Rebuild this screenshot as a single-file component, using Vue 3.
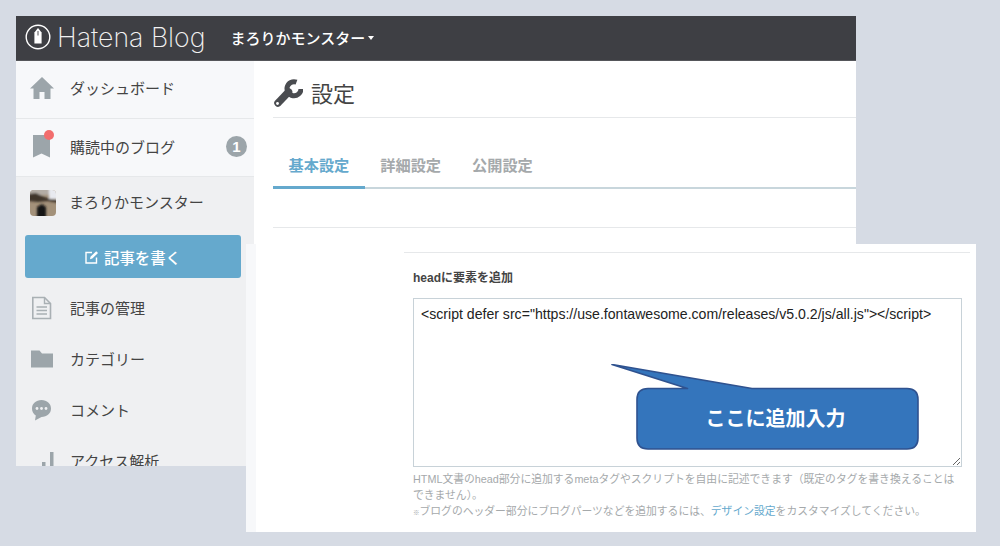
<script setup>
const mainMenu = [
  { label: '記事の管理', icon: 'doc' },
  { label: 'カテゴリー', icon: 'folder' },
  { label: 'コメント', icon: 'comment' },
  { label: 'アクセス解析', icon: 'chart' }
]
const tabs = ['基本設定', '詳細設定', '公開設定']
const headCode = '<script defer src="https://use.fontawesome.com/releases/v5.0.2/js/all.js"><' + '/script>'
</script>

<template>
  <div class="page">
    <!-- 後ろ側のスクリーンショット -->
    <div class="window">
      <header class="topbar">
        <svg class="logo-mark" viewBox="0 0 26 26">
          <circle cx="13" cy="13" r="11.8" fill="none" stroke="#fff" stroke-width="1.4" />
          <path d="M13 4 L16.6 8.5 V19.5 H9.4 V8.5 Z" fill="#fff" />
          <path d="M13 7 V11.5" stroke="#3e3f44" stroke-width="0.9" />
        </svg>
        <span class="logo-text">Hatena Blog</span>
        <span class="blog-name">まろりかモンスター</span>
        <span class="caret"></span>
      </header>

      <div class="columns">
        <aside class="sidebar">
          <div class="side-top">
            <div class="side-row first">
              <svg class="side-icon" viewBox="0 0 24 24">
                <path d="M12 1 L24 12.5 H20.5 V23 H14.5 V16 H9.5 V23 H3.5 V12.5 H0 Z" fill="#9ca5aa" />
              </svg>
              <span>ダッシュボード</span>
            </div>
            <div class="side-row second">
              <span class="bookmark">
                <svg class="side-icon" viewBox="0 0 24 24">
                  <path d="M3 0 H20 V22.5 L11.5 18.5 L3 22.5 Z" fill="#9ca5aa" />
                </svg>
                <i class="dot"></i>
              </span>
              <span class="grow">購読中のブログ</span>
              <span class="count">1</span>
            </div>
          </div>
          <div class="side-bottom">
            <div class="side-row blog">
              <svg class="avatar" viewBox="0 0 26 26">
                <defs>
                  <filter id="soft" x="-10%" y="-10%" width="120%" height="120%">
                    <feGaussianBlur stdDeviation="0.8" />
                  </filter>
                </defs>
                <rect width="26" height="26" fill="#a3917a" />
                <g filter="url(#soft)">
                  <rect x="-2" y="-2" width="30" height="7" fill="#b3aca4" />
                  <rect x="19" y="-2" width="9" height="11" fill="#e8eaf0" />
                  <path d="M-2 4 L6 3 L12 6 L20 9 L28 10 V13 L18 11 L8 12 L-2 11 Z" fill="#3f352c" />
                  <path d="M7 17 L12 14 L16 17 V28 H7 Z" fill="#151313" />
                </g>
              </svg>
              <span class="blog-label">まろりかモンスター</span>
            </div>
            <button class="write-btn">
              <svg class="pen" viewBox="0 0 14 14">
                <path d="M11.5 7.5 V13 H1 V2.5 H7" fill="none" stroke="#fff" stroke-width="1.4" />
                <path d="M5 9.2 L5.5 6.8 L11.2 1.2 L13 3 L7.3 8.6 Z" fill="#fff" />
              </svg>
              記事を書く
            </button>
            <div v-for="item in mainMenu" :key="item.label" class="side-row menu">
              <svg class="side-icon" viewBox="0 0 24 24">
                <template v-if="item.icon === 'doc'">
                  <path d="M2.8 1.5 H14.5 L20.5 7.5 V22.5 H2.8 Z" fill="none" stroke="#a9b0b4" stroke-width="1.6" />
                  <path d="M14.5 1.5 V7.5 H20.5 M6.5 11 H17 M6.5 14.5 H17 M6.5 18 H17" fill="none" stroke="#a9b0b4" stroke-width="1.4" />
                </template>
                <path v-else-if="item.icon === 'folder'" d="M1 3.5 H9.5 L12 6.5 H23 V20.5 H1 Z" fill="#9ca5aa" />
                <template v-else-if="item.icon === 'comment'">
                  <path d="M11.5 2 C17 2 21 5.6 21 10.5 C21 15.4 17 19 11.5 19 L5 22.5 L5.8 17.6 C3.4 16 2 13.5 2 10.5 C2 5.6 6 2 11.5 2 Z" fill="#9ca5aa" />
                  <circle cx="7" cy="10.5" r="1.4" fill="#eff0f2" />
                  <circle cx="11.5" cy="10.5" r="1.4" fill="#eff0f2" />
                  <circle cx="16" cy="10.5" r="1.4" fill="#eff0f2" />
                </template>
                <path v-else d="M5 19 H8.5 V24 H5 Z M12 13 H15.5 V24 H12 Z M20 3 H23.5 V24 H20 Z" fill="#9ca5aa" />
              </svg>
              <span>{{ item.label }}</span>
            </div>
          </div>
        </aside>

        <main class="content">
          <div class="title">
            <svg class="wrench" viewBox="0 0 30 30">
              <path d="M5 25 L15.5 14" stroke="#4a4c50" stroke-width="7.5" stroke-linecap="round" />
              <path d="M23.5 4.2 A7 7 0 1 0 28 11" fill="none" stroke="#4a4c50" stroke-width="5" />
              <circle cx="4.5" cy="25.5" r="1.4" fill="#fff" />
            </svg>
            <h1>設定</h1>
          </div>
          <nav class="tabs">
            <a v-for="(tab, i) in tabs" :key="tab" class="tab" :class="{ active: i === 0 }">{{ tab }}</a>
          </nav>
          <div class="tab-body"></div>
        </main>
      </div>
    </div>

    <!-- 手前側のスクリーンショット -->
    <section class="panel">
      <div class="panel-strip"></div>
      <div class="panel-body">
        <div class="panel-line"></div>
        <h2>headに要素を追加</h2>
        <textarea class="code" readonly :value="headCode"></textarea>
        <p class="note">
          HTML文書のhead部分に追加するmetaタグやスクリプトを自由に記述できます（既定のタグを書き換えることはできません）。<br />
          <small>※</small>ブログのヘッダー部分にブログパーツなどを追加するには、<a>デザイン設定</a>をカスタマイズしてください。
        </p>
      </div>
    </section>

    <!-- 吹き出し -->
    <div class="callout">
      <svg class="callout-shape" viewBox="0 0 310 90">
        <path
          d="M1 0.5 L76.5 24.5 H37 Q26 24.5 26 35.5 V74 Q26 85 37 85 H296 Q307 85 307 74 V35.5 Q307 24.5 296 24.5 H141 Z"
          fill="#3475bc" stroke="#2f528f" stroke-width="1.6" stroke-linejoin="round"
        />
      </svg>
      <span class="callout-text">ここに追加入力</span>
    </div>
  </div>
</template>

<style>
html,
body {
  margin: 0;
  padding: 0;
}
</style>

<style scoped>
.page {
  position: relative;
  width: 1000px;
  height: 546px;
  overflow: hidden;
  background: #d6dbe4;
  font-family: "Liberation Sans", "Noto Sans CJK JP", sans-serif;
  color: #444;
}

.window {
  position: absolute;
  left: 16px;
  top: 16px;
  width: 840px;
  height: 450px;
  overflow: hidden;
  background: #fff;
}

.topbar {
  display: flex;
  align-items: center;
  height: 45px;
  background: #3e3f44;
  color: #fff;
  padding: 0 0 2px 9px;
  box-sizing: border-box;
  border-bottom: 1px solid #55565a;
}

.logo-mark {
  width: 26px;
  height: 26px;
}

.logo-text {
  margin-left: 6px;
  font-family: Inter, sans-serif;
  font-weight: 200;
  font-size: 26.7px;
  color: #f2f2f2;
  white-space: nowrap;
}

.blog-name {
  margin-left: 25px;
  font-size: 15px;
  font-weight: 500;
  white-space: nowrap;
}

.caret {
  margin-left: 3px;
  margin-top: 2px;
  border-left: 3.5px solid transparent;
  border-right: 3.5px solid transparent;
  border-top: 4px solid #fff;
}

.columns {
  display: flex;
}

.sidebar {
  width: 238px;
  flex: none;
  font-size: 15px;
  color: #444;
}

.side-top {
  background: #f7f8fa;
}

.side-bottom {
  background: #eff0f2;
  height: 290px;
}

.side-row {
  display: flex;
  align-items: center;
  padding-left: 14px;
  box-sizing: border-box;
}

.side-row > span:last-child {
  white-space: nowrap;
}

.side-row.first {
  height: 58px;
  padding-bottom: 4px;
  border-bottom: 1px solid #e6e8ea;
}

.side-row.second {
  height: 58px;
  padding-bottom: 2px;
  border-bottom: 1px solid #e6e8ea;
}

.side-row.blog {
  height: 58px;
  padding-bottom: 6px;
}

.blog-label {
  margin-top: -3px;
}

.side-row.menu {
  height: 51px;
}

.side-icon {
  width: 24px;
  height: 24px;
  margin-right: 16px;
  flex: none;
}

.bookmark {
  position: relative;
  display: flex;
}

.dot {
  position: absolute;
  left: 14px;
  top: -5px;
  width: 10px;
  height: 10px;
  border-radius: 50%;
  background: #f26d6d;
}

.grow {
  flex: 1;
}

.count {
  width: 21px;
  height: 21px;
  margin-right: 7px;
  border-radius: 50%;
  background: #9ca5aa;
  color: #fff;
  font-size: 15px;
  font-weight: 700;
  text-align: center;
  line-height: 21px;
}

.avatar {
  width: 26px;
  height: 26px;
  margin-right: 13px;
  border-radius: 4px;
  flex: none;
}

.write-btn {
  display: flex;
  align-items: center;
  justify-content: center;
  gap: 5px;
  width: 216px;
  height: 43px;
  margin: 0 0 4px 9px;
  border: 0;
  border-radius: 3px;
  background: #65a9cd;
  color: #fff;
  font-family: inherit;
  font-size: 15.4px;
  font-weight: 500;
}

.pen {
  width: 14px;
  height: 14px;
}

.content {
  flex: 1;
  padding-left: 19px;
}

.title {
  display: flex;
  align-items: center;
  height: 56px;
  border-bottom: 1px solid #e6e8ea;
}

.wrench {
  width: 30px;
  height: 30px;
  margin: 7px 8px 0 0;
}

.title h1 {
  margin: 6px 0 0;
  font-size: 22px;
  font-weight: 400;
  color: #444;
}

.tabs {
  display: flex;
  height: 69px;
  align-items: flex-end;
  border-bottom: 2px solid #c8d6dc;
}

.tab {
  padding: 0 15.5px 9px;
  margin-bottom: -2px;
  font-size: 15.2px;
  font-weight: 700;
  color: #a5a9ab;
  line-height: 22px;
  border-bottom: 3px solid transparent;
}

.tab.active {
  color: #65a9cd;
  border-bottom-color: #65a9cd;
}

.tab-body {
  height: 38px;
  border-bottom: 1px solid #e6e8ea;
}

.panel {
  position: absolute;
  left: 246px;
  top: 244px;
  width: 730px;
  height: 288px;
  display: flex;
  background: #fff;
}

.panel-strip {
  width: 10px;
  background: #f7f8fa;
}

.panel-body {
  flex: 1;
  padding: 8px 6px 0 148px;
}

.panel-line {
  height: 1px;
  background: #e6e8ea;
}

.panel h2 {
  margin: 17px 0 11px 9px;
  font-size: 12px;
  line-height: 17px;
  font-weight: 700;
  color: #444;
}

.code {
  display: block;
  width: 549px;
  height: 169px;
  margin: 0 0 4px 9px;
  padding: 7px;
  box-sizing: border-box;
  border: 1px solid #c8d2d8;
  outline: 0;
  font-family: "Liberation Sans", sans-serif;
  font-size: 14.1px;
  line-height: 16px;
  color: #222;
  background: #fff;
}

.note {
  width: 549px;
  margin: 0 0 0 9px;
  font-size: 10.8px;
  line-height: 16px;
  color: #a5a9ab;
}

.note small {
  font-size: 6.5px;
}

.note a {
  color: #65a9cd;
}

.callout {
  position: absolute;
  left: 611px;
  top: 364px;
  width: 310px;
  height: 90px;
}

.callout-shape {
  display: block;
  width: 310px;
  height: 90px;
}

.callout-text {
  position: absolute;
  left: 26px;
  top: 24px;
  width: 281px;
  height: 61px;
  padding: 0 4px 2px 0;
  box-sizing: border-box;
  display: flex;
  align-items: center;
  justify-content: center;
  color: #fff;
  font-size: 20px;
  font-weight: 700;
}
</style>
